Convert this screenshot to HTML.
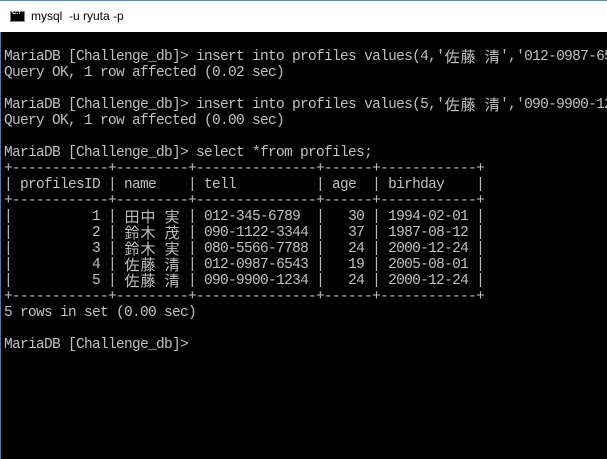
<!DOCTYPE html>
<html><head><meta charset="utf-8"><style>
html,body{margin:0;padding:0;width:607px;height:459px;overflow:hidden;background:#000}
#t{position:absolute;left:0;top:0;width:607px;height:32px;background:#fff;border-top:1px solid #4a8fd0;box-sizing:border-box}
#t .ic{position:absolute;left:10px;top:10px;width:15px;height:11px;background:#000;border:1px solid #888;box-sizing:border-box}
#t .ic:after{content:"C:\\";position:absolute;left:1px;top:-2px;font:bold 6px "Liberation Sans",sans-serif;color:#fff}
#t .tx{position:absolute;left:31px;top:8px;font:12px "Liberation Sans","Noto Sans CJK JP",sans-serif;color:#000}
#c{position:absolute;left:0;top:32px;width:607px;height:427px;border-left:1px solid #3b7fc4;box-sizing:border-box}
pre{position:absolute;left:3px;top:17px;margin:0;font:14.5px/16px "Liberation Mono",monospace;letter-spacing:-0.7px;color:#c0c0c0;white-space:pre}
.j{display:inline-block;width:16px;font-family:"Noto Sans CJK JP",sans-serif;font-size:15px;letter-spacing:0;text-align:center;line-height:16px;vertical-align:top}
</style></head><body>
<div id="t"><div class="ic"></div><div class="tx">mysql&nbsp; -u ryuta -p</div></div>
<div id="c"><pre>MariaDB [Challenge_db]&gt; insert into profiles values(4,'<span class="j">佐</span><span class="j">藤</span> <span class="j">清</span>','012-0987-6543
Query OK, 1 row affected (0.02 sec)

MariaDB [Challenge_db]&gt; insert into profiles values(5,'<span class="j">佐</span><span class="j">藤</span> <span class="j">清</span>','090-9900-1234
Query OK, 1 row affected (0.00 sec)

MariaDB [Challenge_db]&gt; select *from profiles;
+------------+---------+---------------+------+------------+
| profilesID | name    | tell          | age  | birhday    |
+------------+---------+---------------+------+------------+
|          1 | <span class="j">田</span><span class="j">中</span> <span class="j">実</span> | 012-345-6789  |   30 | 1994-02-01 |
|          2 | <span class="j">鈴</span><span class="j">木</span> <span class="j">茂</span> | 090-1122-3344 |   37 | 1987-08-12 |
|          3 | <span class="j">鈴</span><span class="j">木</span> <span class="j">実</span> | 080-5566-7788 |   24 | 2000-12-24 |
|          4 | <span class="j">佐</span><span class="j">藤</span> <span class="j">清</span> | 012-0987-6543 |   19 | 2005-08-01 |
|          5 | <span class="j">佐</span><span class="j">藤</span> <span class="j">清</span> | 090-9900-1234 |   24 | 2000-12-24 |
+------------+---------+---------------+------+------------+
5 rows in set (0.00 sec)

MariaDB [Challenge_db]&gt;</pre></div>
</body></html>
